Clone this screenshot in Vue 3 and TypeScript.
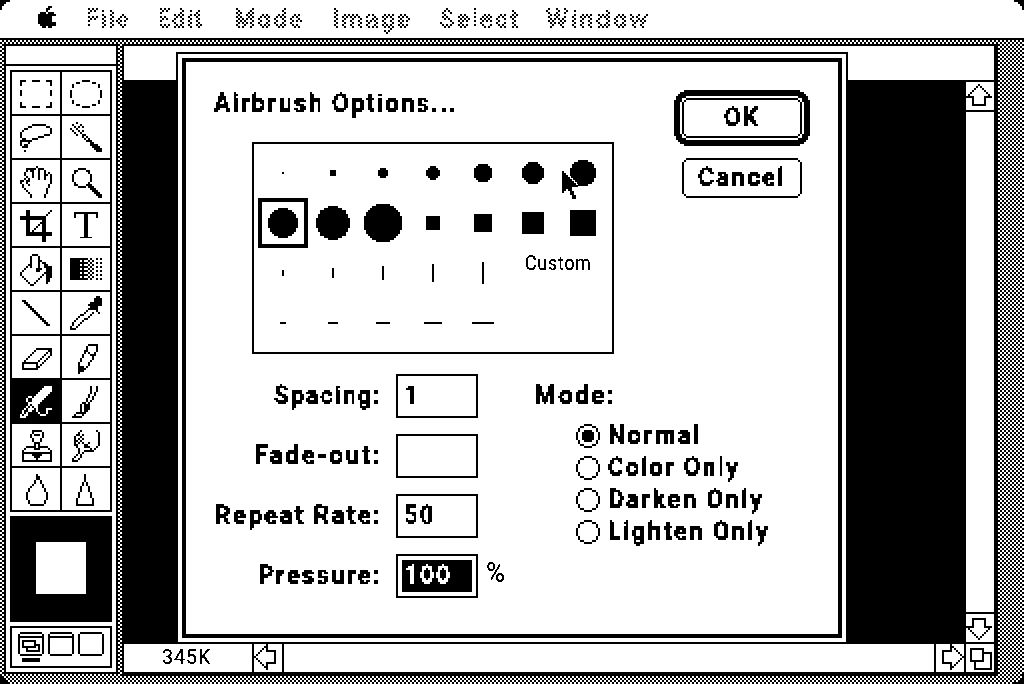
<script setup lang="ts">
import type { Directive } from 'vue'

type Fit = HTMLElement
// Stretches a text run horizontally so that it occupies the given width.
const fitText = (el: Fit, width: number) => {
  const natural = el.offsetWidth
  el.style.transform = `scaleX(${width / natural})`
  el.style.marginRight = `${width - natural}px`
}
const vFit: Directive<Fit, number> = { mounted: (el, b) => fitText(el, b.value) }

type Test = (x: number, y: number) => boolean
// Turns a predicate over a cell grid into an SVG path of horizontal runs.
function raster(w: number, h: number, test: Test): string {
  let d = ''
  for (let y = 0; y < h; y++) {
    let x = 0
    while (x < w) {
      if (!test(x, y)) { x++; continue }
      const s = x
      while (x < w && test(x, y)) x++
      d += `M${s} ${y}h${x - s}v1h${s - x}z`
    }
  }
  return d
}
const inDisc = (x: number, y: number, n: number) => {
  const c = (n - 1) / 2
  return (x - c) ** 2 + (y - c) ** 2 <= (n * n) / 4
}
const disc = (n: number) => raster(n, n, (x, y) => inDisc(x, y, n))
const inRound = (x: number, y: number, w: number, h: number, r: number) => {
  if (x < 0 || y < 0 || x >= w || y >= h) return false
  const dx = Math.max(r - x - 0.5, x + 0.5 - (w - r), 0)
  const dy = Math.max(r - y - 0.5, y + 0.5 - (h - r), 0)
  return dx * dx + dy * dy <= r * r
}
const roundFrame = (w: number, h: number, r: number, t: number) =>
  raster(w, h, (x, y) => inRound(x, y, w, h, r) && !inRound(x - t, y - t, w - 2 * t, h - 2 * t, r - t))

// "x,y-x,y" is a stroke, "x,y+w,h" is a block.
function draw(src: string, w = 24, h = 21): string {
  const on = new Set<number>()
  for (const part of src.trim().split(/\s+/)) {
    if (part.includes('+')) {
      const [p, s] = part.split('+').map(v => v.split(',').map(Number))
      for (let y = 0; y < s[1]; y++) for (let x = 0; x < s[0]; x++) on.add((p[1] + y) * w + p[0] + x)
      continue
    }
    const pts = part.split('-').map(v => v.split(',').map(Number))
    on.add(pts[0][1] * w + pts[0][0])
    for (let i = 1; i < pts.length; i++) {
      const [ax, ay] = pts[i - 1], [bx, by] = pts[i]
      const n = Math.max(Math.abs(bx - ax), Math.abs(by - ay))
      for (let k = 0; k <= n; k++) {
        const t = n ? k / n : 0
        on.add(Math.round(ay + (by - ay) * t) * w + Math.round(ax + (bx - ax) * t))
      }
    }
  }
  return raster(w, h, (x, y) => on.has(y * w + x))
}

const gradient = raster(24, 21, (x, y) => {
  if (x < 4 || x > 19 || y < 5 || y > 15) return false
  if (x < 8) return true
  if (x < 12) return !(x % 2 === 1 && y % 2 === 0)
  if (x < 16) return (x + y) % 2 === 1
  return x % 2 === 1 && y % 2 === 1
})

interface Tool { name: string; d?: string; glyph?: string; active?: boolean }
const tools: Tool[] = [
  { name: 'marquee', d: draw('4,6-4,4-6,4 10,4-13,4 17,4-19,4-19,6 4,9-4,11 19,9-19,11 4,15-4,17-6,17 10,17-13,17 17,17-19,17-19,15') },
  { name: 'ellipse', d: draw('10,4-13,4 7,5-8,5 15,5-16,5 5,6-5,7 18,6-18,7 4,9-4,12 19,9-19,12 5,14-5,15 18,14-18,15 7,16-8,16 15,16-16,16 10,17-13,17') },
  { name: 'lasso', d: draw('8,5-10,4-16,4-18,5-19,6-19,8-17,9-14,10-10,11-8,12-5,11-4,10-4,8-6,6-8,5 4,12-4,14-6,15-8,13-7,12-5,12 6,14-7,15 6,17-6,17') },
  { name: 'wand', d: draw('7,3 5,4 9,4 6,5 8,5 10,5 4,6 7,6 5,7 8,7 10,7 6,8 9,8 7,9 10,9 11,9 10,10 12,10 11,11 13,11 12,12 14,12-19,16 13,11-19,17 13,12-18,17 14,14-17,17') },
  { name: 'hand', d: draw('9,18-9,17-6,14-4,11-4,10-6,9-8,12 8,10-8,9-6,7-6,6-7,4-9,4-10,8 10,8-10,4-12,3-13,4-13,9 13,4-15,4-16,5-16,9 17,7-18,6-19,7-19,11-17,14-16,18') },
  { name: 'zoom', d: raster(24, 21, (x, y) => inDisc(x - 5, y - 4, 10) && !inDisc(x - 6, y - 5, 8)) + draw('13,12-19,18 14,12-19,17 13,13-18,18') },
  { name: 'crop', d: draw('7,3+2,13 4,6+13,2 15,6+2,13 7,14+13,2 10,13-19,3') },
  { name: 'type', glyph: 'T' },
  { name: 'bucket', d: draw('9,9-9,4-10,3-12,3-13,4-13,10 12,10-12,11-13,11 14,10 8,8-4,12-4,13-9,18-10,18-16,12 14,6-16,8 16,8+2,1 16,9+4,1 17,10+3,3 17,13+3,2 17,15+2,2 17,17 15,7+2,1') },
  { name: 'gradient', d: gradient },
  { name: 'line', d: draw('5,4-17,16 6,4-18,16 6,5-18,16') },
  { name: 'dropper', d: draw('16,3+4,4 17,2+2,1 14,5+4,4 13,6-18,10 13,8-6,14-4,17-4,18-6,18-9,15-15,10') },
  { name: 'eraser', d: draw('5,13+8,1 5,13-5,16-12,16-12,13 5,13-12,6-19,6-12,13 19,6-19,9-12,16') },
  { name: 'pencil', d: draw('13,4-17,4-17,6-15,11-11,16-8,18-8,13-13,4 12,7-14,9-16,8 8,15+2,3 10,15+1,2') },
  { name: 'airbrush', active: true, d: draw('16,3+4,1 15,4+5,1 14,5+6,1 13,6+6,1 12,7+6,1 8,8+2,1 11,8+6,1 7,9+1,1 10,9+6,1 7,10+1,1 10,10+5,1 8,11+6,1 8,12+1,1 10,12+3,1 7,13+1,1 9,13+1,1 11,13+2,1 6,14+1,1 8,14+3,1 12,14+1,1 5,15+1,1 8,15+2,1 12,15+1,1 17,14+1,1 18,14+2,1 5,16+1,1 7,16+1,1 13,16+1,1 17,15+1,2 4,17+1,1 6,17+2,1 14,17+3,1 4,18+3,1') },
  { name: 'brush', d: draw('14,3-14,5-12,10 17,3-17,5-14,10 10,11-13,12 9,12-9,15-6,17 13,11-13,14-9,18-5,18 11,12+2,4 9,16+3,1') },
  { name: 'stamp', d: draw('10,3-14,3-15,5-15,6-13,9-11,9-9,6-9,5-10,3 11,5-13,5 11,9-11,12-13,12-13,9 10,11-7,11-6,12 5,13-5,18 19,13-19,18 18,12-17,11-14,11 5,14-19,14 10,15+5,1 11,16+3,1 12,17 5,18-19,18') },
  { name: 'smudge', d: draw('9,3-6,6-6,10-8,12-8,14-5,17-5,18-7,18-11,13-15,13-18,10-18,5-17,3 8,5-10,7-7,10 10,5-6,9 10,9-14,12 13,9-11,11') },
  { name: 'blur', d: draw('12,3-12,5-7,12-7,15-9,18-15,18-17,15-17,12-13,5-12,3') },
  { name: 'sharpen', d: draw('11,3-11,5-9,10-7,16-7,18-15,18-15,16-13,10-11,5') },
]

const apple = draw('5,0+2,1 4,1+2,1 4,2+1,1 1,3+3,1 5,3+3,1 0,4+9,1 0,5+7,1 0,6+7,1 0,7+7,1 0,8+9,1 1,9+8,1 2,10+2,1 5,10+2,1', 9, 11)

interface Menu { text: string; gap: number; width: number }
const menus: Menu[] = [
  { text: 'File', gap: 30, width: 44 },
  { text: 'Edit', gap: 28, width: 46 },
  { text: 'Mode', gap: 30, width: 70 },
  { text: 'Image', gap: 28, width: 80 },
  { text: 'Select', gap: 28, width: 80 },
  { text: 'Window', gap: 26, width: 104 },
]

interface Brush { w: number; h: number; d: string; label?: string }
const block = (w: number, h: number): Brush => ({ w, h, d: `M0 0h${w}v${h}h-${w}z` })
const round = (n: number): Brush => ({ w: n, h: n, d: disc(n) })
const brushes: Brush[] = [
  ...[1, 3, 5, 7, 9, 11, 13, 15, 17, 19].map(round),
  ...[7, 9, 11, 13].map(n => block(n, n)),
  ...[3, 5, 7, 9, 11].map(n => block(1, n)),
  { w: 0, h: 0, d: '', label: 'Custom' },
  ...[3, 5, 7, 9, 11].map(n => block(n, 1)),
]

const fields = [
  { label: 'Spacing:', width: 108, value: '1', vw: 16, active: false },
  { label: 'Fade-out:', width: 128, value: '', vw: 0, active: false },
  { label: 'Repeat Rate:', width: 168, value: '50', vw: 32, active: false },
  { label: 'Pressure:', width: 124, value: '100', vw: 48, active: true },
]
const modes = [
  { label: 'Normal', width: 94 },
  { label: 'Color Only', width: 132 },
  { label: 'Darken Only', width: 156 },
  { label: 'Lighten Only', width: 162 },
]
const ring = raster(12, 12, (x, y) => inDisc(x, y, 12) && !inDisc(x - 1, y - 1, 10))
const arrowLeft = draw('0,6-6,0-6,3-10,3-10,9-6,9-6,12-0,6', 11, 13)
const arrowRight = draw('10,6-4,0-4,3-0,3-0,9-4,9-4,12-10,6', 11, 13)
const arrowUp = draw('6,0-12,6-9,6-9,10-3,10-3,6-0,6-6,0', 13, 11)
const arrowDown = draw('6,10-12,4-9,4-9,0-3,0-3,4-0,4-6,10', 13, 11)
const grow = draw('0,0-6,0-6,6-0,6-0,0 6,2-10,2-10,10-2,10-2,6', 11, 11)
const screens = [
  draw('1,0-11,0 0,1-0,10 12,1-12,10 1,11-11,11 1,2-11,2 2,4-8,4-8,7-2,7-2,4 8,6-10,6-10,9-4,9-4,7', 13, 12),
  draw('1,0-11,0 0,1-0,10 12,1-12,10 1,11-11,11 1,2-11,2', 13, 12),
  draw('1,0-11,0 0,1-0,10 12,1-12,10 1,11-11,11', 13, 12),
]
const corner = draw('0,0+5,1 0,1+3,1 0,2+2,1 0,3+1,2', 5, 5)
const pointer = raster(8, 14, (x, y) =>
  (y < 8 && x <= y) || (y === 8 && x < 5) || (y === 9 && (x < 2 || (x > 2 && x < 5))) ||
  (y === 10 && (x < 1 || (x > 3 && x < 6))) || (y === 11 && x > 3 && x < 6) || (y > 11 && x > 4 && x < 7))
</script>

<template>
  <div class="screen">
    <svg class="defs" width="0" height="0">
      <filter id="crisp" x="0" y="0" width="1" height="1">
        <feComponentTransfer><feFuncA type="discrete" tableValues="0 1" /></feComponentTransfer>
      </filter>
      <filter id="cells" x="0" y="0" width="1" height="1" color-interpolation-filters="sRGB">
        <feConvolveMatrix in="SourceGraphic" order="2" kernelMatrix="1 1 1 1" divisor="4" targetX="0" targetY="0" result="mean" />
        <feFlood x="0" y="0" width="1" height="1" flood-color="#000" result="dot" />
        <feComposite in="dot" in2="dot" operator="over" x="0" y="0" width="2" height="2" />
        <feTile result="grid" />
        <feComposite in="mean" in2="grid" operator="in" />
        <feComponentTransfer result="p"><feFuncA type="discrete" tableValues="0 1" /></feComponentTransfer>
        <feOffset in="p" dx="1" dy="0" result="p1" />
        <feOffset in="p" dx="0" dy="1" result="p2" />
        <feOffset in="p" dx="1" dy="1" result="p3" />
        <feMerge>
          <feMergeNode in="p" /><feMergeNode in="p1" /><feMergeNode in="p2" /><feMergeNode in="p3" />
        </feMerge>
      </filter>
    </svg>

    <header class="menubar">
      <svg class="apple" width="18" height="22" viewBox="0 0 9 11"><path :d="apple" /></svg>
      <span v-for="m in menus" :key="m.text" class="menu" :style="{ marginLeft: m.gap + 'px' }">
        <span class="cells"><span v-fit="m.width" class="chicago">{{ m.text }}</span></span>
      </span>
    </header>

    <main class="desk">
      <aside class="palette">
        <div class="grip"></div>
        <div class="tools">
          <div v-for="t in tools" :key="t.name" class="tool" :class="{ active: t.active }">
            <span v-if="t.glyph" class="serif">{{ t.glyph }}</span>
            <svg v-else width="48" height="42" viewBox="0 0 24 21"><path :d="t.d" /></svg>
          </div>
        </div>
        <div class="colors"><div class="fore"></div></div>
        <div class="screens">
          <div v-for="(s, i) in screens" :key="i" class="mode">
            <svg width="26" height="24" viewBox="0 0 13 12"><path :d="s" /></svg>
            <i v-if="i === 0"></i>
          </div>
        </div>
      </aside>

      <section class="window">
        <div class="titlebar"></div>
        <div class="body">
          <div class="canvas"></div>
          <div class="vscroll">
            <div class="box up"><svg width="26" height="22" viewBox="0 0 13 11"><path :d="arrowUp" /></svg></div>
            <div class="track"></div>
            <div class="box down"><svg width="26" height="22" viewBox="0 0 13 11"><path :d="arrowDown" /></svg></div>
          </div>
        </div>
        <div class="hscroll">
          <div class="size"><span v-fit="49" class="geneva">345K</span></div>
          <div class="box"><svg width="22" height="26" viewBox="0 0 11 13"><path :d="arrowLeft" /></svg></div>
          <div class="track"></div>
          <div class="box right"><svg width="22" height="26" viewBox="0 0 11 13"><path :d="arrowRight" /></svg></div>
          <div class="box grow"><svg width="22" height="22" viewBox="0 0 11 11"><path :d="grow" /></svg></div>
        </div>
      </section>
    </main>

    <div class="dialog">
      <div class="inner">
        <div class="top">
          <div class="left">
            <h1><span class="cells"><span v-fit="244" class="chicago">Airbrush Options...</span></span></h1>
            <div class="brushes">
              <div v-for="(b, i) in brushes" :key="i" class="brush" :class="{ chosen: i === 7, wide: b.label }">
                <span v-if="b.label" v-fit="67" class="geneva">{{ b.label }}</span>
                <svg v-else :width="b.w * 2" :height="b.h * 2" :viewBox="`0 0 ${b.w} ${b.h}`"><path :d="b.d" /></svg>
              </div>
            </div>
          </div>
          <div class="buttons">
            <button class="ok">
              <svg class="frame" width="136" height="56" viewBox="0 0 68 28">
                <path :d="roundFrame(68, 28, 8, 3)" />
                <path transform="translate(4 4)" :d="roundFrame(60, 20, 4, 1)" />
              </svg>
              <span class="cells"><span v-fit="36" class="chicago">OK</span></span>
            </button>
            <button class="cancel">
              <svg class="frame" width="120" height="40" viewBox="0 0 60 20"><path :d="roundFrame(60, 20, 4, 1)" /></svg>
              <span class="cells"><span v-fit="88" class="chicago">Cancel</span></span>
            </button>
          </div>
        </div>
        <div class="bottom">
          <div class="fields">
            <div v-for="f in fields" :key="f.label" class="field">
              <label><span class="cells"><span v-fit="f.width" class="chicago">{{ f.label }}</span></span></label>
              <div class="input" :class="{ active: f.active }">
                <div class="value">
                  <span v-if="f.value" class="cells"><span v-fit="f.vw" class="chicago">{{ f.value }}</span></span>
                </div>
              </div>
              <span v-if="f.active" v-fit="20" class="geneva percent">%</span>
            </div>
          </div>
          <div class="modes">
            <div class="heading"><span class="cells"><span v-fit="82" class="chicago">Mode:</span></span></div>
            <div v-for="(m, i) in modes" :key="m.label" class="radio">
              <svg width="24" height="24" viewBox="0 0 12 12">
                <path :d="ring" />
                <path v-if="i === 0" transform="translate(3 3)" :d="disc(6)" />
              </svg>
              <span class="cells"><span v-fit="m.width" class="chicago">{{ m.label }}</span></span>
            </div>
          </div>
        </div>
      </div>
    </div>

    <svg class="pointer" width="16" height="28" viewBox="0 0 8 14"><path :d="pointer" /></svg>
    <svg v-for="c in ['tl', 'tr', 'bl', 'br']" :key="c" class="corner" :class="c" width="10" height="10" viewBox="0 0 5 5"><path :d="corner" /></svg>
  </div>
</template>

<style>
body { margin: 0; overflow: hidden; }
</style>

<style scoped>
* { box-sizing: border-box; }
.screen {
  position: relative; width: 1024px; height: 684px; overflow: hidden;
  display: flex; flex-direction: column; background: #fff; color: #000;
}
svg { display: block; shape-rendering: crispEdges; fill: currentColor; flex: none; }
.defs { position: absolute; }
.chicago, .geneva { display: inline-block; transform-origin: 0 50%; white-space: nowrap; flex: none; }
.chicago {
  font: 700 25px/31px Roboto, "Liberation Sans", sans-serif; letter-spacing: 2px; height: 30px;
  -webkit-text-stroke: 0.5px currentColor;
}
.geneva { font: 400 20px/24px Roboto, "Liberation Sans", sans-serif; letter-spacing: 1px; height: 24px; filter: url(#crisp); -webkit-text-stroke: 0.2px currentColor; }
.cells { display: inline-flex; height: 30px; flex: none; filter: url(#cells); }

.menubar { display: flex; height: 40px; padding: 4px 0 0 38px; border-bottom: 2px solid #000; }
.apple { margin-top: 2px; }
.menu {
  height: 30px;
  -webkit-mask: conic-gradient(#000 25%, transparent 0 50%, #000 0 75%, transparent 0) 0 0 / 4px 4px;
  mask: conic-gradient(#000 25%, transparent 0 50%, #000 0 75%, transparent 0) 0 0 / 4px 4px;
}

.desk {
  display: flex; flex: 1; gap: 4px; padding: 4px 26px 8px 4px; align-items: flex-start;
  background: conic-gradient(#000 25%, #fff 0 50%, #000 0 75%, #fff 0) 0 0 / 4px 4px;
}
.palette { width: 114px; height: 630px; border: 2px solid #000; background: #fff; padding-bottom: 4px; }
.grip { height: 20px; border-bottom: 2px solid #000; }
.tools {
  display: grid; grid-template-columns: 48px 48px; grid-auto-rows: 42px; gap: 2px;
  width: 102px; margin: 4px; border: 2px solid #000; background: #000;
}
.tool { background: #fff; display: flex; justify-content: center; align-items: center; }
.tool.active { background: #000; color: #fff; }
.serif { font: 400 40px/42px "Liberation Serif", serif; filter: url(#crisp); }
.colors { display: flex; width: 102px; height: 106px; margin: 4px; padding: 26px; background: #000; }
.fore { width: 50px; height: 52px; background: #fff; }
.screens { display: flex; gap: 4px; width: 102px; height: 42px; margin: 4px; padding: 4px 6px; border: 2px solid #000; }
.mode i { display: block; width: 18px; height: 4px; margin: 2px 0 0 4px; background: #000; }

.window {
  display: flex; flex-direction: column; width: 876px; height: 632px;
  border: 2px solid #000; border-right-width: 4px; border-bottom-width: 4px; background: #fff;
}
.titlebar { height: 34px; }
.body { display: flex; flex: 1; }
.canvas { flex: 1; background: #000; }
.vscroll { display: flex; flex-direction: column; width: 28px; padding-top: 2px; background: linear-gradient(#000 2px, #fff 0); }
.vscroll .box { height: 28px; }
.vscroll .up { padding-top: 2px; }
.vscroll .down { padding-top: 4px; }
.vscroll .track { flex: 1; border: solid #000; border-width: 2px 0; }
.hscroll { display: flex; height: 30px; border-top: 2px solid #000; }
.hscroll .box { width: 28px; }
.hscroll .right { padding-left: 6px; }
.hscroll .grow { width: 30px; padding: 4px; border-left: 2px solid #000; }
.hscroll .track { flex: 1; border: solid #000; border-width: 0 2px; }
.size { width: 130px; padding: 1px 0 0 38px; border-right: 2px solid #000; }

.dialog {
  position: absolute; left: 176px; top: 52px; width: 672px; height: 592px;
  border: 2px solid #000; padding: 4px; background: #fff;
}
.inner { height: 580px; border: 4px solid #000; padding: 26px 28px 0 28px; }
.top { display: flex; justify-content: space-between; }
h1 { display: flex; margin: 0; height: 30px; }
.brushes {
  display: grid; grid-template-columns: repeat(7, 50px); grid-auto-rows: 50px;
  width: 362px; height: 212px; margin: 24px 0 0 38px; padding: 4px; border: 2px solid #000;
}
.brush { display: flex; justify-content: center; align-items: center; }
.brush.chosen { border: 4px solid #000; }
.brush.wide { grid-column: span 2; align-items: flex-start; padding: 3px 0 0 1px; }
.buttons { padding-top: 2px; }
button {
  position: relative; display: flex; justify-content: center; align-items: center;
  margin: 0; padding: 0 0 2px; border: 0; background: none; color: #000;
}
.frame { position: absolute; left: 0; top: 0; }
.ok { width: 136px; height: 56px; }
.cancel { width: 120px; height: 40px; margin: 12px 8px; }
.bottom { display: flex; margin-top: 20px; }
.fields { display: flex; flex-direction: column; gap: 16px; width: 264px; }
.field { display: flex; height: 44px; }
label { display: flex; justify-content: flex-end; width: 168px; padding-top: 6px; flex: none; }
.input { width: 82px; height: 44px; margin-left: 14px; border: 2px solid #000; padding: 4px; flex: none; }
.value { display: flex; width: 70px; height: 32px; padding-left: 2px; }
.input.active .value { background: #000; color: #fff; }
.percent { margin-left: 8px; margin-top: 7px; font-size: 27px; }
.modes { padding-left: 56px; }
.heading { display: flex; height: 46px; padding-top: 6px; }
.radio { display: flex; align-items: flex-start; gap: 8px; height: 32px; padding-left: 42px; }
.radio svg { margin-top: 4px; }

.pointer { position: absolute; left: 562px; top: 171px; stroke: #fff; stroke-width: 1; paint-order: stroke; }
.corner { position: absolute; }
.tl { left: 0; top: 0; }
.tr { right: 0; top: 0; transform: scaleX(-1); }
.bl { left: 0; bottom: 0; transform: scaleY(-1); }
.br { right: 0; bottom: 0; transform: scale(-1); }
</style>
